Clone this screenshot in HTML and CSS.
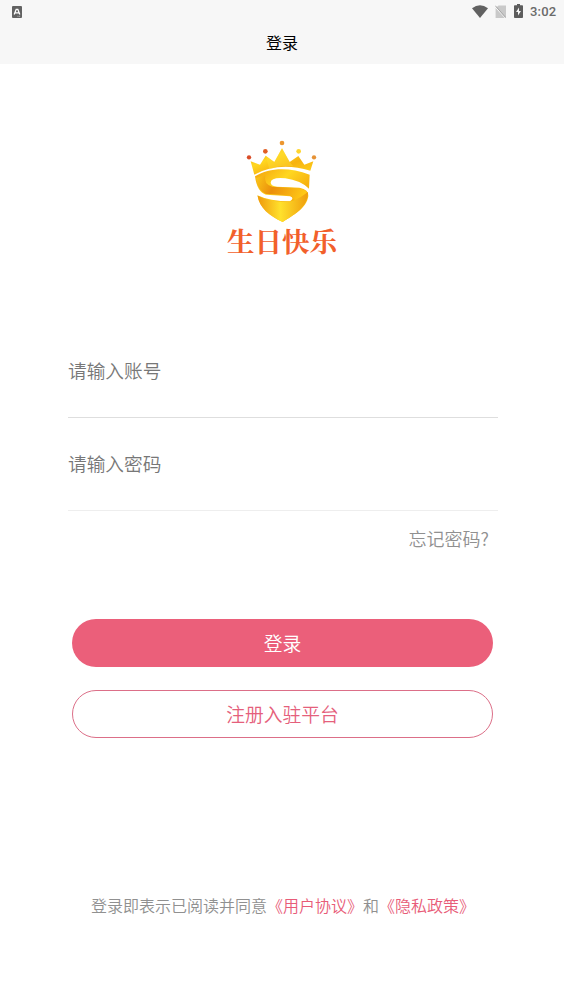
FILE: index.html
```html
<!DOCTYPE html>
<html lang="zh-CN">
<head>
<meta charset="utf-8">
<title>登录</title>
<link rel="stylesheet" href="styles.css">
</head>
<body>
<header class="top">
  <div class="status">
    <svg class="app-icon" width="10" height="12" viewBox="0 0 10 12"><rect width="10" height="12" rx="1" fill="#626262"/><path d="M2.2 8.5 4.2 3.3h1.6l2 5.2M3.4 6.8h3.2" fill="none" stroke="#fff" stroke-width="1.3"/><path d="M5.5 10.3h3" stroke="#ccc" stroke-width=".8" stroke-dasharray="1 .6"/></svg>
    <svg class="wifi" width="16" height="13" viewBox="0 0 16 13"><path d="M0 3.3Q8-2.7 16 3.3L8 13Z" fill="#616161"/></svg>
    <svg class="sim" width="11" height="13" viewBox="0 0 11 13"><path d="M3.5.5H11V13H.6V3Z" fill="#c9c9c9"/><path d="m0 1.800 10.400 11.400" stroke="#f7f7f7" stroke-width="1"/><path d="m.3.7 10.4 11.8" stroke="#a5a5a5" stroke-width="1"/></svg>
    <svg class="battery" width="9" height="14" viewBox="0 0 9 14"><path d="M0 2q0-.8.8-.8H3V0h3v1.2h2.2Q9 1.200 9 2v11q0 1-.8 1H.8Q0 14 0 13Z" fill="#5d5d5d"/><path d="M5 3.500 2 8h2v3.500L7 7H5Z" fill="#f7f7f7"/></svg>
    <span class="time">3:02</span>
  </div>
  <h1 class="title">登录</h1>
</header>
<main class="page">
  <div class="logo">
    <svg width="84" height="92" viewBox="0 0 252 276">
      <defs>
        <linearGradient id="gold" x1="0" y1="0" x2="1" y2="1"><stop offset="0" stop-color="#f3a00c"/><stop offset=".35" stop-color="#ffd720"/><stop offset=".62" stop-color="#f7b210"/><stop offset="1" stop-color="#ffd51d"/></linearGradient>
        <linearGradient id="band" x1="0" y1="0" x2="1" y2=".3"><stop offset="0" stop-color="#fbc819"/><stop offset=".4" stop-color="#eb8f0b"/><stop offset="1" stop-color="#ffc816"/></linearGradient>
        <linearGradient id="base" x1="0" y1="0" x2="1" y2="0"><stop offset="0" stop-color="#ef980c"/><stop offset=".45" stop-color="#ffe12c"/><stop offset="1" stop-color="#ef9d0d"/></linearGradient>
      </defs>
      <path d="M32 82 60 92 77 65 103 84 126 43 149 84 175 66 193 92 220 82 211 110Q116 82 43 122Z" fill="url(#gold)"/>
      <path d="M103 84 126 43 149 84 160 97Q120 92 88 106L77 65Z" fill="#ffde34" opacity=".45"/>
      <path d="M45 127C88 101 145 98 209 122L207 164Q181 139 136 133Q93 129 92 146Q93 156 112 158L178 161Q207 166 205 186C200 224 158 244 128 264C88 245 58 220 52 184Q90 202 150 202Q164 192 151 187L78 182Q51 174 45 127Z" fill="url(#gold)"/>
      <path d="M76 124Q70 151 97 158L178 163Q205 168 202 187Q190 211 159 226Q178 196 145 184L78 180Q55 172 48 132Z" fill="url(#band)"/>
      <path d="M53 185Q104 209 158 201Q184 190 204 174C204 222 158 244 128 264C88 245 58 222 53 185Z" fill="url(#base)"/>
      <circle cx="27" cy="70" r="6.500" fill="#d94c27"/><circle cx="76" cy="52" r="7" fill="#e15e23"/><circle cx="126" cy="27" r="7" fill="#ec962f"/><circle cx="176" cy="52" r="7" fill="#ffd52f"/><circle cx="222" cy="70" r="6.500" fill="#e69235"/>
    </svg>
    <div class="brand">生日快乐</div>
  </div>
  <form class="form">
    <div class="field">请输入账号</div>
    <div class="field password">请输入密码</div>
    <a class="forgot">忘记密码?</a>
    <div class="button primary">登录</div>
    <div class="button outline">注册入驻平台</div>
  </form>
  <p class="terms">登录即表示已阅读并同意<a>《用户协议》</a>和<a>《隐私政策》</a></p>
</main>
</body>
</html>
```
FILE: styles.css
```css
* { box-sizing: border-box; }
body {
  margin: 0;
  height: 1002px;
  background: #fff;
  font-family: "Noto Sans CJK SC", sans-serif;
  font-weight: 350;
  overflow: hidden;
}
.top { height: 64px; background: #f7f7f7; }
.status { height: 23px; display: flex; align-items: center; padding: 0 7px 0 12px; }
.app-icon { margin-right: auto; }
.wifi { margin-right: 7px; }
.sim { margin-right: 8px; }
.battery { margin-right: 7px; position: relative; top: -1px; }
.time { width: 27px; font: 500 13px/23px Roboto, sans-serif; color: #6a6a6a; white-space: nowrap; letter-spacing: .2px; }
.title { margin: 0; text-align: center; font-size: 16px; font-weight: 400; line-height: 38px; color: #000; }
.page { padding-top: 70px; }
.logo { display: flex; flex-direction: column; align-items: center; height: 206px; }
.brand {
  margin-top: -6px;
  font: 700 27.500px/40px "Noto Serif CJK SC", "Noto Sans CJK SC", serif;
  color: #f2602b;
}
.form { width: 430px; margin: 0 auto 0 68px; display: flex; flex-direction: column; }
.field { height: 78px; border-bottom: 1px solid #dedede; font-size: 18.700px; line-height: 60px; color: #777; }
.password { height: 93px; line-height: 90px; border-color: #eee; }
.forgot { align-self: flex-end; margin: 12px 9px 0 0; font-size: 18px; line-height: 30px; color: #909090; }
.button { width: 421px; height: 48px; margin-left: 4px; border-radius: 24px; text-align: center; font-size: 18.800px; }
.primary { margin-top: 66px; background: #eb5f7a; color: #fff; line-height: 48px; }
.outline { margin-top: 23px; border: 1px solid #dc6f88; color: #e55f7c; line-height: 46px; }
.terms { margin: 155px 0 0 91px; font-size: 16px; line-height: 24px; color: #909090; white-space: nowrap; }
.terms a { color: #e85c78; }
```
